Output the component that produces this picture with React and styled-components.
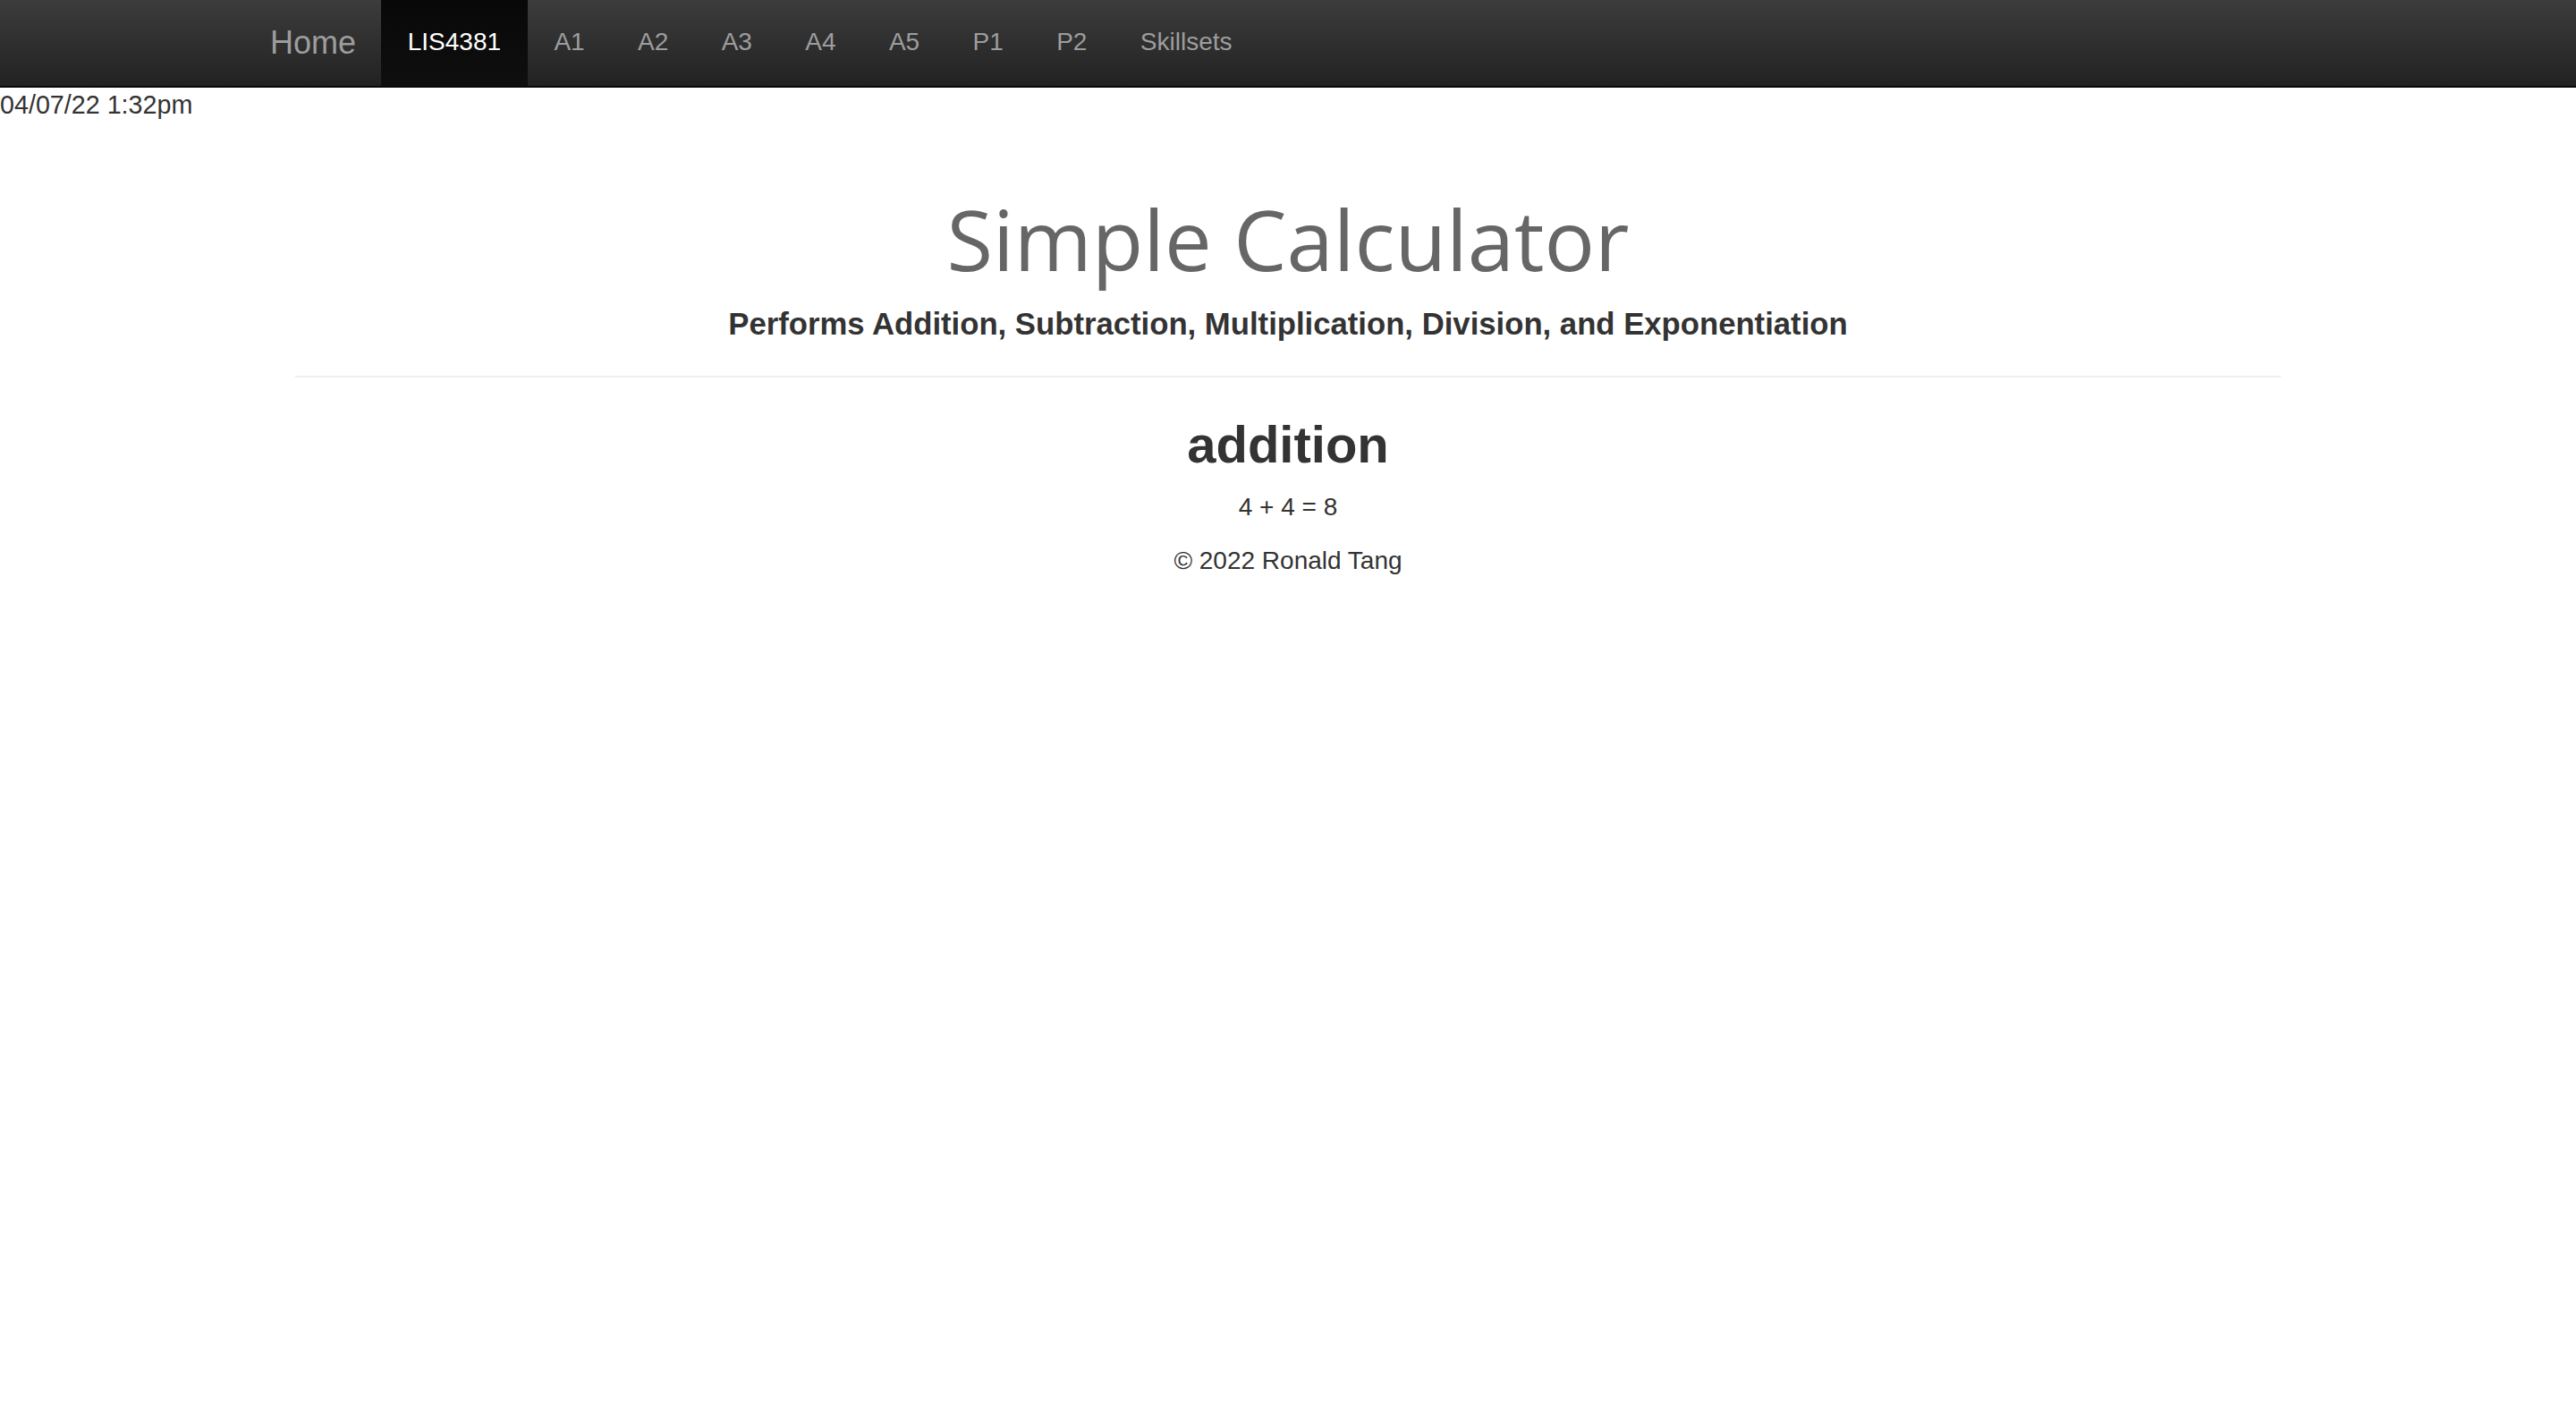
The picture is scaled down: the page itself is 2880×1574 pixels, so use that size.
import React from 'react'
import styled, { createGlobalStyle } from "styled-components";

const GlobalStyle = createGlobalStyle`
  html, body {
    margin: 0;
    padding: 0;
    background: #fff;
  }
  body {
    font-family: "Liberation Sans", Arial, Helvetica, sans-serif;
    color: #333;
  }
`

const Navbar = styled.nav`
    height: 96px;
    border-bottom: 2px solid #080808;
    background: linear-gradient(to bottom, #3c3c3c 0%, #222 100%);
`

const NavInner = styled.div`
    width: 2340px;
    margin: 0 auto;
    display: flex;
    align-items: stretch;
    height: 100%;
`

const Brand = styled.a`
    display: block;
    padding: 28px 28px 0 32px;
    font-size: 36px;
    line-height: 40px;
    color: #9d9d9d;
    text-decoration: none;
`

const NavList = styled.ul`
    display: flex;
    list-style-type: none;
    margin: 0;
    padding: 0;
`

const NavLink = styled.a`
    display: block;
    height: 100%;
    box-sizing: border-box;
    padding: 27px 29.7px 0;
    font-size: 28px;
    line-height: 40px;
    text-decoration: none;
    color: ${props => props.active ? "#fff" : "#9d9d9d"};
    background: ${props => props.active ? "linear-gradient(to bottom, #080808 0%, #0f0f0f 100%)" : "transparent"};
`

const Stamp = styled.div`
    font-size: 28.7px;
    line-height: 38px;
    color: #333;
`

const Main = styled.div`
    width: 2220px;
    margin: 0 auto;
    text-align: center;
`

const Title = styled.h1`
    margin: 79px 0 0;
    font-family: "Open Sans", "DejaVu Sans", sans-serif;
    font-weight: 500;
    font-size: 94px;
    line-height: 104px;
    color: #666;
`

const Subtitle = styled.h4`
    margin: 23px 0 0;
    font-size: 34.7px;
    line-height: 40px;
    font-weight: 700;
    color: #333;
`

const Rule = styled.hr`
    margin: 38px 0 0;
    border: 0;
    border-top: 2px solid #eee;
`

const Operation = styled.h2`
    margin: 42px 0 0;
    font-size: 58px;
    line-height: 66px;
    font-weight: 700;
    color: #333;
`

const Line = styled.p`
    margin: ${props => props.gap}px 0 0;
    font-size: 28px;
    line-height: 40px;
    color: #333;
`

const links = ["A1", "A2", "A3", "A4", "A5", "P1", "P2", "Skillsets"]

export default function App() {
    return (
        <>
            <GlobalStyle />
            <Navbar>
                <NavInner>
                    <Brand href="#">Home</Brand>
                    <NavList>
                        <li><NavLink href="#" active>LIS4381</NavLink></li>
                        {links.map(l => (
                            <li key={l}><NavLink href="#">{l}</NavLink></li>
                        ))}
                    </NavList>
                </NavInner>
            </Navbar>
            <Stamp>04/07/22 1:32pm</Stamp>
            <Main>
                <Title>Simple Calculator</Title>
                <Subtitle>Performs Addition, Subtraction, Multiplication, Division, and Exponentiation</Subtitle>
                <Rule />
                <Operation>addition</Operation>
                <Line gap={17}>4 + 4 = 8</Line>
                <Line gap={20}>© 2022 Ronald Tang</Line>
            </Main>
        </>
    )
}
